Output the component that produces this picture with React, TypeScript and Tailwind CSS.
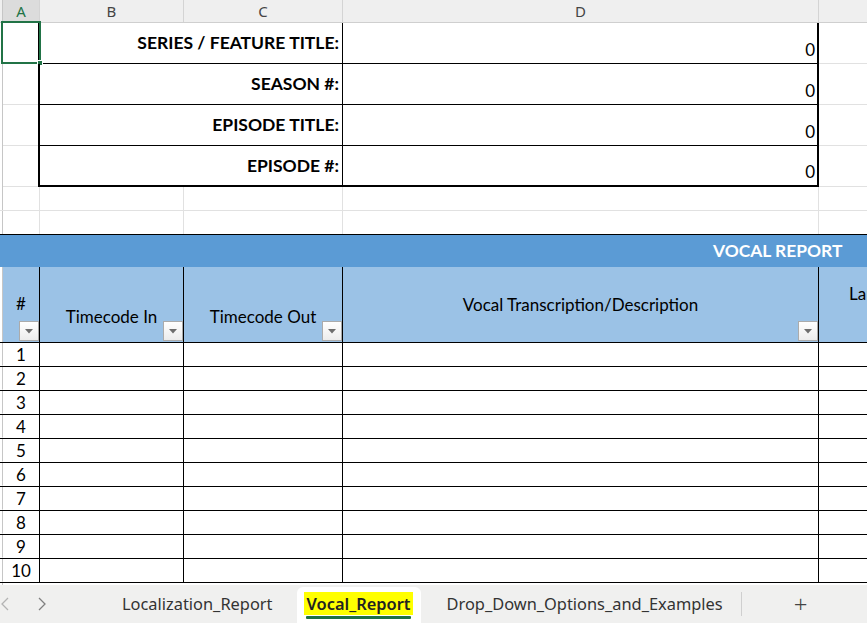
import type { ReactElement, ReactNode } from 'react';

// ============================================================================
// Sheet constants
// ============================================================================

const BODY = "font-[family-name:'Lato',sans-serif]";
const UI = "font-[family-name:'Noto_Sans',sans-serif]";

const INFO_ROWS = ['SERIES / FEATURE TITLE:', 'SEASON #:', 'EPISODE TITLE:', 'EPISODE #:'];
const DATA_ROWS = [1, 2, 3, 4, 5, 6, 7, 8, 9, 10];

// ============================================================================
// Small pieces
// ============================================================================

function Gutter({ className = '' }: { className?: string }): ReactElement {
  return <div className={`w-[3px] shrink-0 border-r border-[#c6c6c6] ${className}`} />;
}

function FilterButton(): ReactElement {
  return (
    <div className="absolute right-0 bottom-[1px] w-[20px] h-[20px] border border-[#ababab] bg-gradient-to-b from-white to-[#ececec] flex items-center justify-center">
      <svg width="8" height="5" viewBox="0 0 8 5">
        <path d="M0 0 L8 0 L4 4.5 Z" fill="#6d6d6d" />
      </svg>
    </div>
  );
}

function ColHeader({ label, width, active }: { label: string; width: string; active?: boolean }): ReactElement {
  return (
    <div
      className={`${width} shrink-0 h-full border-r border-[#d4d4d4] flex items-center justify-center text-[15px] ${
        active ? 'bg-[#dcdcdc] text-[#217346]' : 'text-[#444]'
      }`}
    >
      {label}
    </div>
  );
}

function HeaderCell({
  width,
  children,
  pad,
}: {
  width: string;
  children?: ReactNode;
  pad: string;
}): ReactElement {
  return (
    <div className={`${width} shrink-0 h-full relative flex flex-col items-center border-r border-black ${pad}`}>
      <span className="leading-[20px] whitespace-nowrap">{children}</span>
      <FilterButton />
    </div>
  );
}

// ============================================================================
// Component
// ============================================================================

export default function App(): ReactElement {
  return (
    <div className={`w-[867px] h-[623px] overflow-hidden bg-white flex flex-col text-black ${BODY}`}>
      {/* column letters */}
      <div className={`h-[23px] shrink-0 flex bg-[#efefef] border-b border-[#cfcfcf] ${UI}`}>
        <Gutter />
        <ColHeader label="A" width="w-[37px]" active />
        <ColHeader label="B" width="w-[144px]" />
        <ColHeader label="C" width="w-[159px]" />
        <ColHeader label="D" width="w-[476px]" />
        <div className="flex-1" />
      </div>

      {/* title block */}
      {INFO_ROWS.map((label, i) => {
        const last = i === INFO_ROWS.length - 1;
        const edge = last ? 'border-b-2 border-b-black' : 'border-b border-b-black';
        return (
          <div key={label} className="h-[41px] shrink-0 flex relative">
            <Gutter />
            <div className="w-[35px] shrink-0 border-b border-[#e1e1e1]" />
            <div
              className={`w-[305px] shrink-0 border-l-2 border-l-black border-r border-r-black ${edge} flex items-center justify-end pr-[3px] pt-[1px] font-bold text-[17.5px]`}
            >
              {label}
            </div>
            <div
              className={`w-[476px] shrink-0 border-r-2 border-r-black ${edge} flex items-end justify-end pr-[2px] pb-[3px] text-[17px] leading-[20px]`}
            >
              0
            </div>
            <div className="flex-1 border-b border-[#e1e1e1]" />
            {i === 0 && (
              <div className="absolute left-[1px] top-[-2px] w-[40px] h-[43px] border-2 border-[#217346]">
                <div className="absolute right-[-4px] bottom-[-4px] w-[6px] h-[6px] bg-[#217346] border border-white" />
              </div>
            )}
          </div>
        );
      })}

      {/* spacer rows */}
      {[0, 1].map((r) => (
        <div
          key={r}
          className={`h-[24px] shrink-0 flex border-b ${r === 1 ? 'border-black' : 'border-[#e1e1e1]'}`}
        >
          <Gutter />
          <div className="w-[37px] shrink-0 border-r border-[#e1e1e1]" />
          <div className="w-[144px] shrink-0 border-r border-[#e1e1e1]" />
          <div className="w-[159px] shrink-0 border-r border-[#e1e1e1]" />
          <div className="w-[476px] shrink-0 border-r border-[#e1e1e1]" />
          <div className="flex-1" />
        </div>
      ))}

      {/* report banner */}
      <div className="h-[32px] shrink-0 flex bg-[#5b9bd5]">
        <div className="pl-[713px] flex items-center text-white font-bold text-[17.4px] whitespace-nowrap">
          VOCAL REPORT
        </div>
      </div>

      {/* column titles */}
      <div className="h-[76px] shrink-0 flex bg-[#9bc2e6] border-b border-black text-[17px]">
        <Gutter className="bg-white" />
        <HeaderCell width="w-[37px]" pad="pt-[27px]">
          #
        </HeaderCell>
        <HeaderCell width="w-[144px]" pad="pt-[40px]">
          Timecode In
        </HeaderCell>
        <HeaderCell width="w-[159px]" pad="pt-[40px]">
          Timecode Out
        </HeaderCell>
        <HeaderCell width="w-[476px]" pad="pt-[28px]">
          Vocal Transcription/Description
        </HeaderCell>
        <div className="flex-1 overflow-hidden pl-[30px] pt-[17px] leading-[20px] whitespace-nowrap">
          Language
        </div>
      </div>

      {/* data rows */}
      {DATA_ROWS.map((n) => (
        <div key={n} className="h-[24px] shrink-0 flex border-b border-black text-[17px]">
          <Gutter className="border-b border-b-white" />
          <div className="w-[37px] shrink-0 border-r border-black flex items-center justify-center leading-[20px]">
            {n}
          </div>
          <div className="w-[144px] shrink-0 border-r border-black" />
          <div className="w-[159px] shrink-0 border-r border-black" />
          <div className="w-[476px] shrink-0 border-r border-black" />
          <div className="flex-1" />
        </div>
      ))}

      <div className="h-[2px] shrink-0 flex">
        <Gutter />
      </div>

      {/* sheet tabs */}
      <div className={`flex-1 bg-[#f0f0ef] flex items-end text-[16.4px] text-[#333] ${UI}`}>
        <div className="h-full flex items-center pl-[1px] gap-[29px]">
          <svg width="8" height="14" viewBox="0 0 8 14">
            <path d="M7 1 L1 7 L7 13" stroke="#b3b3b3" strokeWidth="1.3" fill="none" />
          </svg>
          <svg width="8" height="14" viewBox="0 0 8 14">
            <path d="M1 1 L7 7 L1 13" stroke="#808080" strokeWidth="1.3" fill="none" />
          </svg>
        </div>
        <div className="h-full flex items-center pl-[76px] pr-[24px]">Localization_Report</div>
        <div className="h-[36px] w-[124px] bg-white rounded-t-[6px] flex flex-col items-center pt-[5px]">
          <span className="bg-[#ffff00] px-[3px] font-semibold text-[#222] leading-[23px]">Vocal_Report</span>
          <span className="mt-[1px] h-[3px] w-[105px] bg-[#1e7145] rounded-[1px]" />
        </div>
        <div className="h-full flex items-center pl-[26px] pr-[18px]">Drop_Down_Options_and_Examples</div>
        <div className="h-full flex items-center">
          <div className="w-px h-[24px] bg-[#cfcfcf]" />
        </div>
        <div className="h-full flex items-center pl-[52px] text-[24px] font-light text-[#444]">+</div>
      </div>
    </div>
  );
}
